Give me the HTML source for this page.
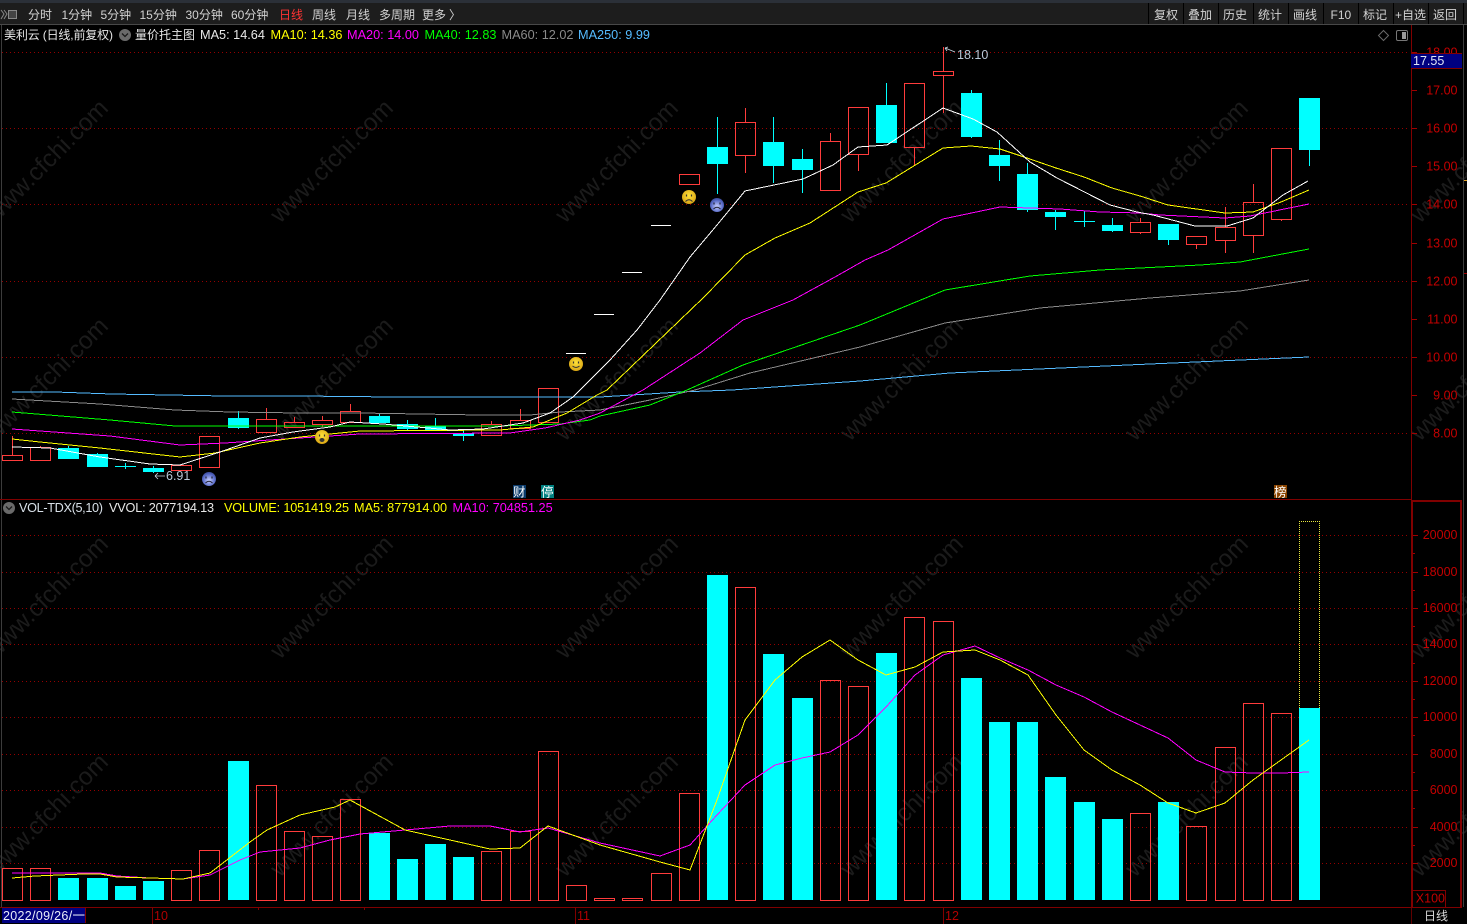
<!DOCTYPE html>
<html><head><meta charset="utf-8"><title>美利云</title>
<style>
html,body{margin:0;padding:0;background:#000;width:1467px;height:924px;overflow:hidden}
svg{display:block;font-family:"Liberation Sans","Noto Sans CJK SC",sans-serif}
.c{shape-rendering:crispEdges}
.ma{fill:none;stroke-width:1;shape-rendering:crispEdges}
.wm text{font-size:24.5px;fill:#1b1b1b}
.tb{font-size:12px;fill:#d2d2d2}
.hd{font-size:12.7px}
.ax{font-size:12.5px;fill:#c40000;text-anchor:end}
</style></head><body>
<svg width="1467" height="924" viewBox="0 0 1467 924" xmlns="http://www.w3.org/2000/svg">
<defs>
<radialGradient id="y" cx="50%" cy="40%" r="60%"><stop offset="0" stop-color="#ffe23a"/><stop offset="1" stop-color="#d9a514"/></radialGradient>
<radialGradient id="b" cx="50%" cy="60%" r="60%"><stop offset="0" stop-color="#c8d0ff"/><stop offset=".7" stop-color="#5a6cc8"/><stop offset="1" stop-color="#3a4a9a"/></radialGradient>
</defs>
<rect width="1467" height="924" fill="#000"/>
<!-- watermark -->
<g class="wm">
<text transform="translate(-5 224) rotate(-45)">www.cfchi.com</text><text transform="translate(280 224) rotate(-45)">www.cfchi.com</text><text transform="translate(565 224) rotate(-45)">www.cfchi.com</text><text transform="translate(850 224) rotate(-45)">www.cfchi.com</text><text transform="translate(1135 224) rotate(-45)">www.cfchi.com</text><text transform="translate(1420 224) rotate(-45)">www.cfchi.com</text>
<text transform="translate(-5 442) rotate(-45)">www.cfchi.com</text><text transform="translate(280 442) rotate(-45)">www.cfchi.com</text><text transform="translate(565 442) rotate(-45)">www.cfchi.com</text><text transform="translate(850 442) rotate(-45)">www.cfchi.com</text><text transform="translate(1135 442) rotate(-45)">www.cfchi.com</text><text transform="translate(1420 442) rotate(-45)">www.cfchi.com</text>
<text transform="translate(-5 660) rotate(-45)">www.cfchi.com</text><text transform="translate(280 660) rotate(-45)">www.cfchi.com</text><text transform="translate(565 660) rotate(-45)">www.cfchi.com</text><text transform="translate(850 660) rotate(-45)">www.cfchi.com</text><text transform="translate(1135 660) rotate(-45)">www.cfchi.com</text><text transform="translate(1420 660) rotate(-45)">www.cfchi.com</text>
<text transform="translate(-5 878) rotate(-45)">www.cfchi.com</text><text transform="translate(280 878) rotate(-45)">www.cfchi.com</text><text transform="translate(565 878) rotate(-45)">www.cfchi.com</text><text transform="translate(850 878) rotate(-45)">www.cfchi.com</text><text transform="translate(1135 878) rotate(-45)">www.cfchi.com</text><text transform="translate(1420 878) rotate(-45)">www.cfchi.com</text>
</g>
<!-- toolbar -->
<rect class="c" x="0" y="0" width="1467" height="3" fill="#2b3038"/>
<rect class="c" x="0" y="3" width="1467" height="21" fill="#1d1d1d"/>
<rect class="c" x="0" y="24" width="1467" height="1" fill="#484848"/>
<path class="c" d="M1148 3h1v21h-1zM1183 3h1v21h-1zM1218 3h1v21h-1zM1253 3h1v21h-1zM1288 3h1v21h-1zM1323 3h1v21h-1zM1358 3h1v21h-1zM1393 3h1v21h-1zM1428 3h1v21h-1zM1463 3h1v21h-1z" fill="#000"/>
<path d="M1 10l3 4-3 5M4 10l3 4-3 5" fill="none" stroke="#888" stroke-width="1"/>
<rect x="8.5" y="10.5" width="8" height="8" fill="#444" stroke="#888"/>
<g class="tb">
<text x="28" y="19">分时</text><text x="61.5" y="19">1分钟</text><text x="100.5" y="19">5分钟</text><text x="139.5" y="19">15分钟</text><text x="185.5" y="19">30分钟</text><text x="231" y="19">60分钟</text><text x="279" y="19" fill="#ff3333">日线</text><text x="312" y="19">周线</text><text x="346" y="19">月线</text><text x="379" y="19">多周期</text><text x="422" y="19">更多</text><text x="449" y="19">〉</text>
<text x="1154" y="19">复权</text><text x="1188" y="19">叠加</text><text x="1223" y="19">历史</text><text x="1258" y="19">统计</text><text x="1293" y="19">画线</text><text x="1330.5" y="19">F10</text><text x="1363" y="19">标记</text><text x="1395" y="19">+自选</text><text x="1433" y="19">返回</text>
</g>
<!-- header main -->
<g class="hd">
<text x="4" y="39" font-size="12" fill="#e6e6e6" textLength="109">美利云 (日线,前复权)</text>
<text x="135" y="39" font-size="12" fill="#e6e6e6">量价托主图</text>
<text x="200" y="39" fill="#e8e8e8">MA5: 14.64</text>
<text x="270.5" y="39" fill="#ffff00">MA10: 14.36</text>
<text x="347" y="39" fill="#ff00ff">MA20: 14.00</text>
<text x="424.5" y="39" fill="#00ff00">MA40: 12.83</text>
<text x="501.5" y="39" fill="#8a8a8a">MA60: 12.02</text>
<text x="578" y="39" fill="#55bbff">MA250: 9.99</text>
</g>
<circle cx="125" cy="35" r="6" fill="#6a6a6a"/><path d="M122 33.5l3 3 3-3" fill="none" stroke="#1a1a1a" stroke-width="1.3"/>
<path d="M1383.5 30.5l5 5-5 5-5-5z" fill="none" stroke="#6a6a6a"/>
<rect x="1396.5" y="30.5" width="11" height="10" rx="1.5" fill="none" stroke="#777"/><rect x="1402" y="32" width="4" height="7" fill="#999"/>
<!-- grid -->
<g class="c" stroke="#950000" stroke-dasharray="1 3" fill="none">
<path d="M2 52.5H1409M2 128.5H1409M2 204.5H1409M2 281.5H1409M2 357.5H1409M2 433.5H1409"/>
<path d="M2 535.5H1409M2 572.5H1409M2 608.5H1409M2 644.5H1409M2 681.5H1409M2 717.5H1409M2 754.5H1409M2 790.5H1409M2 827.5H1409M2 863.5H1409"/>
</g>
<!-- frames -->
<g class="c">
<rect x="1" y="25" width="1" height="882" fill="#3c3c3c"/>
<rect x="1463" y="25" width="1" height="882" fill="#3c3c3c"/>
<rect x="1411" y="25" width="1" height="475" fill="#800000"/>
<rect x="0" y="499" width="1411" height="1" fill="#800000"/>
<rect x="1411" y="500" width="51" height="2" fill="#800000"/>
<rect x="1411" y="500" width="2" height="408" fill="#800000"/>
<rect x="1460" y="500" width="2" height="408" fill="#800000"/>
<rect x="0" y="907" width="1462" height="1" fill="#800000"/>
<rect x="1411" y="908" width="1" height="16" fill="#600000"/>
<rect x="1412" y="890" width="34" height="1" fill="#800000"/><rect x="1445" y="890" width="1" height="17" fill="#800000"/>
<path d="M1412 52h5v1h-5zM1412 90h5v1h-5zM1412 128h5v1h-5zM1412 166h5v1h-5zM1412 204h5v1h-5zM1412 243h5v1h-5zM1412 281h5v1h-5zM1412 319h5v1h-5zM1412 357h5v1h-5zM1412 395h5v1h-5zM1412 433h5v1h-5z" fill="#a00000"/>
<path d="M1413 535h5v1h-5zM1413 572h5v1h-5zM1413 608h5v1h-5zM1413 644h5v1h-5zM1413 681h5v1h-5zM1413 717h5v1h-5zM1413 754h5v1h-5zM1413 790h5v1h-5zM1413 827h5v1h-5zM1413 863h5v1h-5z" fill="#a00000"/>
<path d="M1413 553h2v1h-2zM1413 590h2v1h-2zM1413 626h2v1h-2zM1413 663h2v1h-2zM1413 699h2v1h-2zM1413 735h2v1h-2zM1413 772h2v1h-2zM1413 808h2v1h-2zM1413 845h2v1h-2z" fill="#a00000"/>
<path d="M1464 180h3v1h-3z" fill="#e0a020"/><path d="M1464 273h3v1h-3z" fill="#a00000"/>
</g>
<!-- axis labels -->
<g class="ax">
<text x="1457.5" y="56.5">18.00</text><text x="1457.5" y="94.5">17.00</text><text x="1457.5" y="132.5">16.00</text><text x="1457.5" y="170.5">15.00</text><text x="1457.5" y="208.5">14.00</text><text x="1457.5" y="247.5">13.00</text><text x="1457.5" y="285.5">12.00</text><text x="1457.5" y="323.5">11.00</text><text x="1457.5" y="361.5">10.00</text><text x="1457.5" y="399.5">9.00</text><text x="1457.5" y="437.5">8.00</text>
<text x="1457.5" y="539">20000</text><text x="1457.5" y="576">18000</text><text x="1457.5" y="612">16000</text><text x="1457.5" y="648">14000</text><text x="1457.5" y="685">12000</text><text x="1457.5" y="721">10000</text><text x="1457.5" y="758">8000</text><text x="1457.5" y="794">6000</text><text x="1457.5" y="831">4000</text><text x="1457.5" y="867">2000</text>
<text x="1445" y="902.5">X100</text>
</g>
<rect class="c" x="1411" y="53" width="51" height="16" fill="#000080"/>
<path class="c" d="M1411 53h51v1h-51zM1411 68h51v1h-51z" fill="#800000"/>
<text x="1413" y="65" font-size="12.5" fill="#dfe6f5">17.55</text>
<!-- candles red -->
<path class="c" fill="none" stroke="#ff3c3c" d="M2.5 455.5h20v5h-20zM12.5 436v19M30.5 447.5h20v13h-20zM40.5 446v2M171.5 465.5h20v5h-20zM199.5 436.5h20v31h-20zM256.5 419.5h20v13h-20zM266.5 408v11M284.5 422.5h20v5h-20zM294.5 417v5M312.5 420.5h20v4h-20zM322.5 416v4M322.5 425v2M340.5 411.5h20v11h-20zM350.5 404v7M481.5 424.5h20v11h-20zM491.5 421v3M510.5 420.5h20v8h-20zM520.5 409v11M538.5 388.5h20v34h-20zM679.5 174.5h20v10h-20zM735.5 122.5h20v33h-20zM745.5 108v14M745.5 156v17M820.5 141.5h20v49h-20zM830.5 133v8M848.5 107.5h20v47h-20zM858.5 155v16M904.5 83.5h20v64h-20zM914.5 148v18M933.5 71.5h20v4h-20zM943.5 47v24M943.5 76v37M1130.5 222.5h20v10h-20zM1140.5 218v4M1140.5 233v1M1186.5 236.5h20v8h-20zM1196.5 245v4M1215.5 227.5h20v13h-20zM1225.5 207v20M1225.5 241v12M1243.5 202.5h20v33h-20zM1253.5 184v18M1253.5 236v17M1271.5 148.5h20v71h-20zM1281.5 220v1"/>
<!-- candles cyan -->
<path class="c" fill="#00ffff" d="M58 448h21v11h-21zM68 446h1v13h-1zM87 454h21v13h-21zM97 453h1v14h-1zM115 466h21v1h-21zM125 463h1v6h-1zM143 468h21v4h-21zM153 466h1v7h-1zM228 418h21v10h-21zM238 411h1v18h-1zM369 416h21v7h-21zM379 413h1v10h-1zM397 424h21v5h-21zM407 420h1v10h-1zM425 426h21v4h-21zM435 418h1v13h-1zM453 433h21v3h-21zM463 431h1v10h-1zM707 147h21v17h-21zM717 117h1v77h-1zM763 142h21v24h-21zM773 117h1v66h-1zM792 159h21v11h-21zM802 149h1v44h-1zM876 105h21v38h-21zM886 83h1v22h-1zM961 93h21v44h-21zM971 90h1v48h-1zM989 155h21v11h-21zM999 140h1v41h-1zM1017 174h21v36h-21zM1027 163h1v49h-1zM1045 212h21v5h-21zM1055 210h1v20h-1zM1074 221h21v1h-21zM1084 211h1v16h-1zM1102 225h21v6h-21zM1112 218h1v14h-1zM1158 224h21v16h-21zM1168 240h1v5h-1zM1299 98h21v52h-21zM1309 150h1v16h-1z"/>
<path class="c" fill="#fff" d="M566 353h20v1h-20zM594 314h20v1h-20zM622 272h20v1h-20zM651 225h20v1h-20z"/>
<!-- MA lines -->
<polyline class="ma" stroke="#55bbff" points="12,392 55,392 112,394 225,396 300,396 394,397 500,397 600,397 680,392 732,390 860,381 950,373 1150,364 1309,357"/>
<polyline class="ma" stroke="#8a8a8a" points="12,399 100,404 175,410 230,412 300,413 360,413 420,414 480,415 530,415 560,412 600,410 650,400 695,390 750,373 860,347 945,323 1040,308 1150,298 1240,291 1309,280"/>
<polyline class="ma" stroke="#00ff00" points="12,412 110,420 175,426 300,426 400,426 500,426 560,424 590,420 600,416 650,405 687,390 743,365 860,325 945,290 1030,276 1100,270 1200,265 1240,262 1309,249"/>
<polyline class="ma" stroke="#ff00ff" points="12,429 110,436 180,445 225,443 300,438 360,434 510,433 545,428 580,420 600,413 643,390 700,353 743,320 793,300 835,277 865,260 888,250 943,219 1000,207 1060,209 1100,212 1140,213 1160,215 1225,218 1250,216 1309,204"/>
<polyline class="ma" stroke="#ffff00" points="12,439 40,442 100,448 180,457 215,453 260,443 300,437 360,431 500,430 533,427 567,413 597,395 607,390 703,298 745,255 775,238 810,223 858,192 886,183 943,148 971,146 1000,149 1027,158 1056,168 1084,177 1112,188 1140,196 1168,205 1225,213 1253,212 1281,202 1309,190"/>
<polyline class="ma" stroke="#ffffff" points="12,447 50,448 100,457 150,464 180,465 220,452 260,438 293,432 330,427 350,422 383,424 417,427 450,430 483,429 523,423 550,413 573,397 580,390 610,360 637,330 660,300 690,257 717,225 745,191 803,179 833,165 858,147 887,145 943,108 973,119 997,132 1030,162 1057,178 1110,205 1137,212 1153,215 1195,226 1227,226 1253,218 1283,195 1308,181"/>
<!-- faces -->
<g>
<circle cx="576" cy="364" r="7" fill="url(#y)"/><path d="M573.5 361.5v2M578.5 361.5v2" stroke="#333" stroke-width="1.2"/><path d="M572.5 366q3.5 3 7 0" fill="none" stroke="#333"/>
<circle cx="689" cy="197" r="7" fill="url(#y)"/><path d="M686.5 194.5v2M691.5 194.5v2" stroke="#333" stroke-width="1.2"/><path d="M685.5 201.5q3.5-3.5 7 0" fill="none" stroke="#333"/>
<circle cx="717" cy="205" r="7" fill="url(#b)"/><path d="M714 202.5v2M720 202.5v2" stroke="#223" stroke-width="1.2"/><path d="M713.5 209q3.5-3.5 7 0" fill="none" stroke="#223"/>
<circle cx="209" cy="479" r="7" fill="url(#b)"/><path d="M206 476.5v2M212 476.5v2" stroke="#223" stroke-width="1.2"/><path d="M205.5 483q3.5-3.5 7 0" fill="none" stroke="#223"/>
<circle cx="322" cy="437" r="7" fill="url(#y)"/><path d="M319.5 434.5v2M324.5 434.5v2" stroke="#333" stroke-width="1.2"/><ellipse cx="322" cy="440" rx="2.5" ry="2" fill="#333"/>
</g>
<!-- extremes -->
<path d="M165 476H155M155 476l3-3M155 476l3 3" fill="none" stroke="#c8d4e0" stroke-width=".8"/>
<text x="166" y="480" font-size="12.5" fill="#b8c8d8">6.91</text>
<path d="M955 52L945 48M945 48l3-1M945 48l2 3" fill="none" stroke="#c8d4e0" stroke-width=".8"/>
<text x="957" y="59" font-size="12.5" fill="#b8c8d8">18.10</text>
<!-- tags -->
<rect class="c" x="513" y="485" width="13" height="13" fill="#0a3a6a"/><text x="513" y="496.5" font-size="12.5" fill="#fff">财</text>
<rect class="c" x="541" y="485" width="13" height="13" fill="#008080"/><text x="541" y="496.5" font-size="12.5" fill="#fff">停</text>
<rect class="c" x="1274" y="485" width="13" height="13" fill="#8a4400"/><text x="1274" y="496.5" font-size="12.5" fill="#fff">榜</text>
<!-- vol header -->
<circle cx="9" cy="508" r="6" fill="#6a6a6a"/><path d="M6 506.5l3 3 3-3" fill="none" stroke="#1a1a1a" stroke-width="1.3"/>
<g class="hd">
<text x="19" y="512" fill="#d8e0e8" textLength="84">VOL-TDX(5,10)</text>
<text x="109" y="512" fill="#e8e8e8" textLength="105">VVOL: 2077194.13</text>
<text x="224" y="512" fill="#ffff00" textLength="125">VOLUME: 1051419.25</text>
<text x="354" y="512" fill="#ffff00">MA5: 877914.00</text>
<text x="452.5" y="512" fill="#ff00ff">MA10: 704851.25</text>
</g>
<!-- volume red -->
<path class="c" fill="none" stroke="#ff3c3c" d="M2.5 868.5h20V900.5h-20zM30.5 868.5h20V900.5h-20zM171.5 870.5h20V900.5h-20zM199.5 850.5h20V900.5h-20zM256.5 785.5h20V900.5h-20zM284.5 831.5h20V900.5h-20zM312.5 836.5h20V900.5h-20zM340.5 799.5h20V900.5h-20zM481.5 851.5h20V900.5h-20zM510.5 831.5h20V900.5h-20zM538.5 751.5h20V900.5h-20zM566.5 885.5h20V900.5h-20zM594.5 898.5h20V900.5h-20zM622.5 898.5h20V900.5h-20zM651.5 873.5h20V900.5h-20zM679.5 793.5h20V900.5h-20zM735.5 587.5h20V900.5h-20zM820.5 680.5h20V900.5h-20zM848.5 686.5h20V900.5h-20zM904.5 617.5h20V900.5h-20zM933.5 621.5h20V900.5h-20zM1130.5 813.5h20V900.5h-20zM1186.5 826.5h20V900.5h-20zM1215.5 747.5h20V900.5h-20zM1243.5 703.5h20V900.5h-20zM1271.5 713.5h20V900.5h-20z"/>
<path class="c" fill="#00ffff" d="M58 878h21V900h-21zM87 878h21V900h-21zM115 886h21V900h-21zM143 881h21V900h-21zM228 761h21V900h-21zM369 833h21V900h-21zM397 859h21V900h-21zM425 844h21V900h-21zM453 857h21V900h-21zM707 575h21V900h-21zM763 654h21V900h-21zM792 698h21V900h-21zM876 653h21V900h-21zM961 678h21V900h-21zM989 722h21V900h-21zM1017 722h21V900h-21zM1045 777h21V900h-21zM1074 802h21V900h-21zM1102 819h21V900h-21zM1158 802h21V900h-21zM1299 708h21V900h-21z"/>
<path class="c" fill="none" stroke="#e8e840" stroke-dasharray="1 1" d="M1299.5 708V521.5H1319.5V708"/>
<!-- vol MA -->
<polyline class="ma" stroke="#ff00ff" points="12,873 100,873 117,876 150,878 183,879 210,875 240,860 260,852 300,848 330,840 360,834 405,830 450,826 490,826 520,832 548,828 600,843 660,856 690,845 717,815 745,785 775,765 802,758 830,752 858,735 886,707 915,675 943,655 975,646 1000,658 1028,670 1056,685 1084,697 1112,712 1140,725 1168,738 1196,760 1225,772 1253,773 1281,773 1309,772"/>
<polyline class="ma" stroke="#ffff00" points="12,878 35,876 83,874 100,874 117,877 150,878 183,879 210,873 250,842 267,830 300,815 335,807 350,800 405,830 450,840 490,849 520,848 548,826 600,845 660,862 690,870 717,800 745,720 775,680 802,657 830,640 858,660 886,675 915,667 943,652 975,650 1000,660 1028,675 1056,715 1084,750 1112,770 1140,785 1168,803 1196,813 1225,803 1253,780 1281,760 1309,740"/>
<!-- bottom -->
<rect class="c" x="2" y="908" width="83" height="15" fill="#000080"/>
<path class="c" d="M85 908h1v15h-1z" fill="#800000"/>
<text x="3" y="920" font-size="12.5" fill="#e8ecf8" textLength="82">2022/09/26/一</text>
<path class="c" d="M152 908h1v16h-1zM258 908h1v2h-1zM364 908h1v2h-1zM575 908h1v16h-1zM943 908h1v16h-1z" fill="#800000"/>
<text x="154" y="920" font-size="12.5" fill="#b00000">10</text>
<text x="577" y="920" font-size="12.5" fill="#b00000">11</text>
<text x="945" y="920" font-size="12.5" fill="#b00000">12</text>
<text x="1424" y="920" font-size="12" fill="#d8d8d8">日线</text>
</svg>
</body></html>
